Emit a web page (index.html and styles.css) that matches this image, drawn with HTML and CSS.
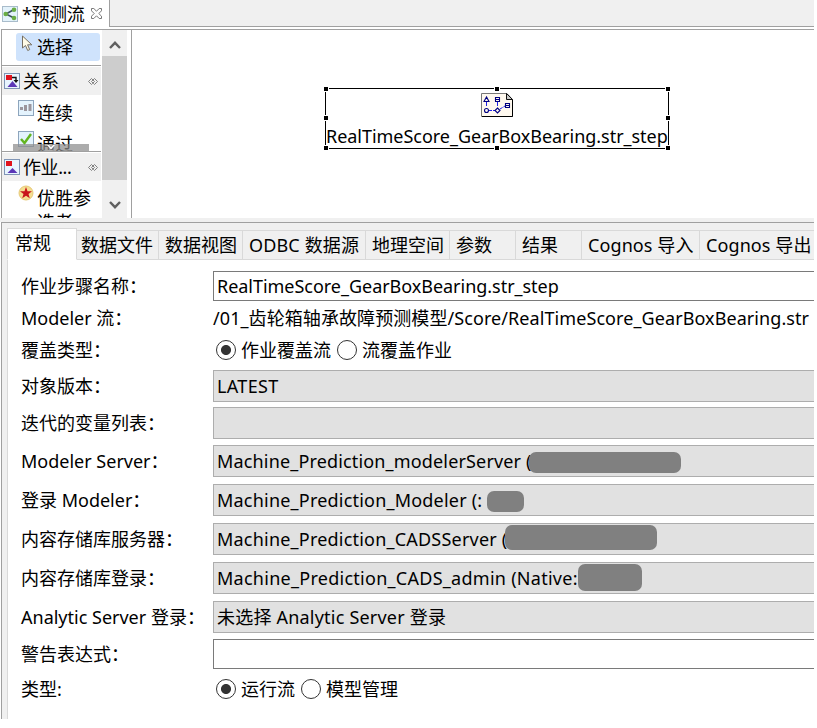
FILE: index.html
```html
<!DOCTYPE html>
<html lang="zh-CN">
<head>
<meta charset="utf-8">
<title>预测流</title>
<link rel="stylesheet" href="styles.css">
</head>
<body>
<div class="app">
  <header class="editor-tabs">
    <div class="editor-tab">
      <svg class="tab-icon" width="16" height="16" viewBox="0 0 16 16"><rect x=".5" y=".5" width="15" height="15" fill="#e3f2fb" stroke="#a9bccb"/><path d="M12 3.5 4 8l8 4" fill="none" stroke="#3e5560" stroke-width="1.6"/><g fill="#69ad45"><circle cx="12" cy="3.8" r="2.3"/><circle cx="3.7" cy="8" r="2.3"/><circle cx="12" cy="12" r="2.3"/></g></svg>
      <span class="tab-title">*预测流</span>
      <svg width="11" height="11" viewBox="0 0 11 11"><path d="M.5.5h2.3l2.7 2.7L8.200.5h2.300v2.300L7.800 5.500l2.700 2.700v2.300H8.200L5.500 7.800 2.800 10.500H.5V8.200l2.700-2.700L.5 2.800z" fill="#fff" stroke="#777"/></svg>
    </div>
    <div class="tab-rest"></div>
  </header>

  <section class="editor">
    <aside class="palette">
      <div class="tool-wrap"><div class="tool selected">
        <svg class="cursor" width="11" height="17" viewBox="0 0 11 17"><path d="M.5 1v12l3-2.500 2.200 5 2-.9-2.100-4.800h4.200z" fill="#fffbe6" stroke="#776f62"/></svg>
        <span>选择</span>
      </div></div>
      <div class="drawer-head">
        <svg width="16" height="16" viewBox="0 0 16 16"><rect x=".5" y=".5" width="15" height="15" fill="#e8f5ff" stroke="#8095b5"/><path d="M2 2h6v5H2z" fill="#e0131d"/><path d="M8 4.500h4V8" fill="none" stroke="#111" stroke-width="1.400"/><path d="M9.500 7h5L12 10z" fill="#111"/><path d="m8.500 8 5 6h-10z" fill="#5b37b7"/></svg>
        <span>关系</span>
        <svg class="pin" width="10" height="7" viewBox="0 0 10 7"><path d="M3.500.5l-3 3 3 3 1-1M6.500.5l3 3-3 3-1-1M3.500.5l3 3-2 2M6.500.5l-3 3 2 2" fill="none" stroke="#757575" stroke-width=".9"/></svg>
      </div>
      <div class="drawer relations">
        <div class="entry"><svg width="16" height="16" viewBox="0 0 16 16"><rect x=".5" y=".5" width="15" height="15" fill="#e4f3fd" stroke="#8da5bd"/><path d="M2 7h3v3H2zM6 5h3v6H6zM10.500 4h3v7h-3z" fill="#9b969d"/></svg><span>连续</span></div>
        <div class="entry pass"><svg width="16" height="16" viewBox="0 0 16 16"><rect x=".5" y=".5" width="15" height="15" fill="#e4f3fd" stroke="#8da5bd"/><path d="m3 8 3.500 4L13 3" fill="none" stroke="#62b51f" stroke-width="2.400"/></svg><span>通过</span></div>
        <div class="more"><svg width="8" height="5" viewBox="0 0 8 5"><path d="M0 0h2l2 2 2-2h2L4 4.500z" fill="#fff"/></svg></div>
      </div>
      <div class="drawer-head jobs">
        <svg width="16" height="16" viewBox="0 0 16 16"><rect x=".5" y=".5" width="15" height="15" fill="#e8f5ff" stroke="#8095b5"/><path d="M2 2h6v5H2z" fill="#e0131d"/><path d="m8.500 9 5 5h-10z" fill="#5b37b7"/></svg>
        <span>作业...</span>
        <svg class="pin" width="10" height="7" viewBox="0 0 10 7"><path d="M3.500.5l-3 3 3 3 1-1M6.500.5l3 3-3 3-1-1M3.500.5l3 3-2 2M6.500.5l-3 3 2 2" fill="none" stroke="#757575" stroke-width=".9"/></svg>
      </div>
      <div class="drawer champion">
        <svg width="16" height="16" viewBox="0 0 16 16"><circle cx="8" cy="8" r="7" fill="#f5de91" stroke="#e7c978"/><path d="m8 2 1.500 4.200H14l-3.500 2.700 1.300 4.400L8 10.700l-3.800 2.600 1.300-4.400L2 6.200h4.500z" fill="#c8151b"/></svg>
        <span>优胜参选者</span>
      </div>
    </aside>
    <div class="scrollbar">
      <div class="arrow"><svg width="12" height="8" viewBox="0 0 12 8"><path d="m1 7 5-5.200L11 7" fill="none" stroke="#606060" stroke-width="2.400"/></svg></div>
      <div class="thumb"></div>
      <div class="arrow down"><svg width="12" height="8" viewBox="0 0 12 8"><path d="m1 1 5 5.200L11 1" fill="none" stroke="#606060" stroke-width="2.400"/></svg></div>
    </div>
    <div class="canvas">
      <div class="node">
        <svg class="node-icon" width="32" height="24" viewBox="0 0 32 24"><path d="M.5.5H26l5.500 6v17H.5z" fill="#fff9ef" stroke="#777"/><path d="M1 23.500h30.500V6.500" fill="none" stroke="#000"/><path d="M25.500.5v6h6z" fill="#c9c9c9" stroke="#111"/><g fill="none" stroke="#2222e8"><path d="M5.500 9v6M16.500 9v6" stroke-dasharray="4 2"/><path d="M8 17.500h6M19 16l5-3" stroke-dasharray="3 1"/></g><g fill="none" stroke="#000080" stroke-width="1.100"><path d="m5.500 4-2.500 4.500h5zM14.500 4.500h4v4h-4zM14.500 6.500h4M24.500 10.500h4v4h-4zM24.500 12.500h4M16.500 15l2.500 2.500-2.500 2.500-2.500-2.500z"/><circle cx="5.500" cy="17.500" r="2"/></g></svg>
        <span class="node-label">RealTimeScore_GearBoxBearing.str_step</span>
        <i class="handle h-l h-t"></i><i class="handle h-c h-t"></i><i class="handle h-r h-t"></i>
        <i class="handle h-l h-m"></i><i class="handle h-r h-m"></i>
        <i class="handle h-l h-b"></i><i class="handle h-c h-b"></i><i class="handle h-r h-b"></i>
      </div>
    </div>
  </section>

  <section class="properties">
    <nav class="tabs">
      <div class="tab active t1">常规</div><div class="tab t2">数据文件</div><div class="tab t3">数据视图</div><div class="tab t4">ODBC 数据源</div><div class="tab t5">地理空间</div><div class="tab t6">参数</div><div class="tab t7">结果</div><div class="tab t8">Cognos 导入</div><div class="tab t9">Cognos 导出</div>
    </nav>
    <div class="form">
      <label>作业步骤名称：</label><div class="input"><span class="step-name">RealTimeScore_GearBoxBearing.str_step</span></div>
      <label class="l34">Modeler 流：</label><div class="path l34"><span>/01_齿轮箱轴承故障预测模型/Score/RealTimeScore_GearBoxBearing.str</span></div>
      <label>覆盖类型：</label><div class="radios"><i class="radio on"></i><span>作业覆盖流</span><i class="radio"></i><span>流覆盖作业</span></div>
      <label class="l32">对象版本：</label><div class="combo version">LATEST</div>
      <label class="l32">迭代的变量列表：</label><div class="combo"></div>
      <label class="l32">Modeler Server：</label><div class="combo server"><span>Machine_Prediction_modelerServer (</span><i class="mask m1"></i></div>
      <label class="l32">登录 Modeler：</label><div class="combo"><span>Machine_Prediction_Modeler (:</span><i class="mask m2"></i></div>
      <label class="l32">内容存储库服务器：</label><div class="combo"><span>Machine_Prediction_CADSServer (</span><i class="mask m3"></i></div>
      <label class="l32">内容存储库登录：</label><div class="combo admin"><span>Machine_Prediction_CADS_admin (Native:</span><i class="mask m4"></i></div>
      <label class="l32">Analytic Server 登录：</label><div class="combo">未选择 Analytic Server 登录</div>
      <label>警告表达式：</label><div class="input"></div>
      <label class="l26">类型:</label><div class="radios l26"><i class="radio on"></i><span>运行流</span><i class="radio"></i><span>模型管理</span></div>
    </div>
  </section>
</div>
</body>
</html>
```
FILE: styles.css
```css
* { box-sizing: border-box; }
body {
  margin: 0;
  background: #fff;
  color: #000;
  font-family: "Noto Sans", "Noto Sans CJK SC", sans-serif;
  font-size: 18px;
  overflow: hidden;
}
svg { display: block; flex: none; }
span, label, .tab, .combo { white-space: nowrap; }

.app {
  width: 814px;
  height: 719px;
  display: flex;
  flex-direction: column;
  overflow: hidden;
  background: linear-gradient(#fff 218px, #f0f0f0 218px, #f0f0f0 222px, #fff 222px);
}

.editor-tabs { display: flex; height: 29px; flex: none; }
.editor-tab { width: 109px; display: flex; align-items: center; padding: 0 0 2px 2px; }
.tab-title { margin-left: 4px; width: 69px; line-height: 26px; letter-spacing: -.4px; }
.tab-rest { flex: 1; height: 27px; background: #f0f0f0; border-left: 1px solid #a0a0a0; border-bottom: 1px solid #a0a0a0; }

.editor { display: flex; height: 189px; flex: none; margin-left: 1px; border-left: 1px solid #a0a0a0; border-top: 1px solid #a0a0a0; overflow: hidden; }
.palette { width: 99px; height: 188px; display: flex; flex-direction: column; overflow: hidden; flex: none; }
.tool-wrap { height: 36px; padding: 3px 1px 0 14px; border-bottom: 1px solid #a0a0a0; flex: none; }
.tool { height: 28px; border-radius: 3px; display: flex; padding-left: 6px; line-height: 28px; }
.selected { background: #cfe3fc; }
.cursor { margin: 2px 4px 0 0; }
.drawer-head { height: 28px; flex: none; margin-top: 1px; background: #f0f0f0; display: flex; align-items: center; padding: 0 3px 0 2px; }
.drawer-head span { margin-left: 3px; line-height: 28px; }
.drawer-head.jobs span { letter-spacing: -.4px; }
.pin { margin-left: auto; }
.drawer { flex: none; overflow: hidden; padding-left: 16px; }
.relations { position: relative; height: 57px; border-bottom: 1px solid #a0a0a0; }
.entry { display: flex; height: 31px; padding-top: 5px; line-height: 26px; }
.entry span, .champion span { margin-left: 3px; }
.more { position: absolute; left: 11px; bottom: 0; width: 76px; height: 7px; background: rgba(140,140,140,.72); display: flex; justify-content: center; align-items: center; }
.champion { display: flex; padding-top: 4px; height: 37px; }
.champion span { width: 56px; white-space: normal; line-height: 24px; margin-top: 1px; }

.scrollbar { width: 26px; margin-left: 1px; flex: none; background: #f0f0f0; display: flex; flex-direction: column; border-right: 1px solid #fff; }
.arrow { height: 26px; display: flex; align-items: center; justify-content: center; padding-top: 4px; }
.thumb { height: 124px; background: #cdcdcd; }
.arrow.down { height: 38px; padding-top: 11px; }
.canvas { flex: 1; margin-left: 3px; border-left: 1px solid #a0a0a0; }

.node { position: relative; width: 344px; height: 61px; margin: 58px 0 0 193px; border: 1px solid #000; }
.node-icon { margin: 4px 0 0 155px; }
.node-label { display: block; line-height: 30px; margin-top: 4px; letter-spacing: -.03px; }
.handle { position: absolute; width: 6px; height: 6px; background: #000; border: 1px solid #fff; }
.h-l { left: -3px; }
.h-c { left: 168px; }
.h-r { right: -3px; }
.h-t { top: -3px; }
.h-m { top: 26px; }
.h-b { bottom: -3px; }

.properties { margin: 4px 0 0 1px; border-left: 1px solid #a0a0a0; border-top: 1px solid #a0a0a0; flex: 1; background: #f0f0f0; padding: 5px 0 0 5px; }
.tabs { display: flex; align-items: flex-end; height: 32px; }
.tab { height: 30px; line-height: 28px; border: 1px solid #d9d9d9; border-left: 0; padding-left: 6px; flex: none; overflow: hidden; }
.tab.active { height: 32px; line-height: 28px; border-left: 1px solid #d9d9d9; border-bottom-color: #fff; background: #fff; padding-left: 7px; }
.t1 { width: 70px; }
.tab.t2 { width: 82px; padding-left: 4px; }
.t3 { width: 84px; }
.t4 { width: 123px; letter-spacing: .15px; }
.t5 { width: 84px; }
.t6, .t7 { width: 66px; }
.t8 { width: 118px; letter-spacing: .1px; }
.t9 { width: 116px; letter-spacing: .1px; }

.form {
  display: grid;
  grid-template-columns: 192px 1fr;
  grid-template-rows: 30px 34px 35px 37px 38px 39px 39px 39px 39px 38px 37px 26px;
  align-items: start;
  height: 460px;
  padding: 11px 0 0 13px;
  background: #fff;
  border-left: 1px solid #d9d9d9;
}
.form label, .radios { line-height: 30px; }
.form .l34 { line-height: 34px; }
.form .l32 { line-height: 32px; }
.form .l26 { line-height: 26px; }
.input { height: 30px; border: 1px solid #7a7a7a; border-right: 0; padding-left: 3px; line-height: 28px; }
.step-name { letter-spacing: -.03px; }
.path { letter-spacing: .08px; }
.combo { position: relative; height: 32px; background: #e1e1e1; border: 1px solid #adadad; border-right: 0; padding-left: 3px; line-height: 30px; letter-spacing: .21px; }
.combo.server { letter-spacing: .16px; }
.combo.admin { letter-spacing: .27px; }
.combo.version { letter-spacing: .35px; }
.radios { display: flex; align-items: center; padding-left: 3px; }
.radios span { margin: 0 6px 0 5px; }
.radio { width: 20px; height: 20px; border: 1px solid #333; border-radius: 50%; background: #fff; flex: none; }
.radio.on { background: radial-gradient(circle, #333 0 4.600px, #fff 5.400px); }
.mask { position: absolute; background: #808080; border-radius: 7px; }
.m1 { left: 315px; top: 6px; width: 152px; height: 21px; }
.m2 { left: 273px; top: 6px; width: 37px; height: 21px; }
.m3 { left: 291px; top: 1px; width: 152px; height: 25px; }
.m4 { left: 364px; top: 1px; width: 64px; height: 27px; }
```
